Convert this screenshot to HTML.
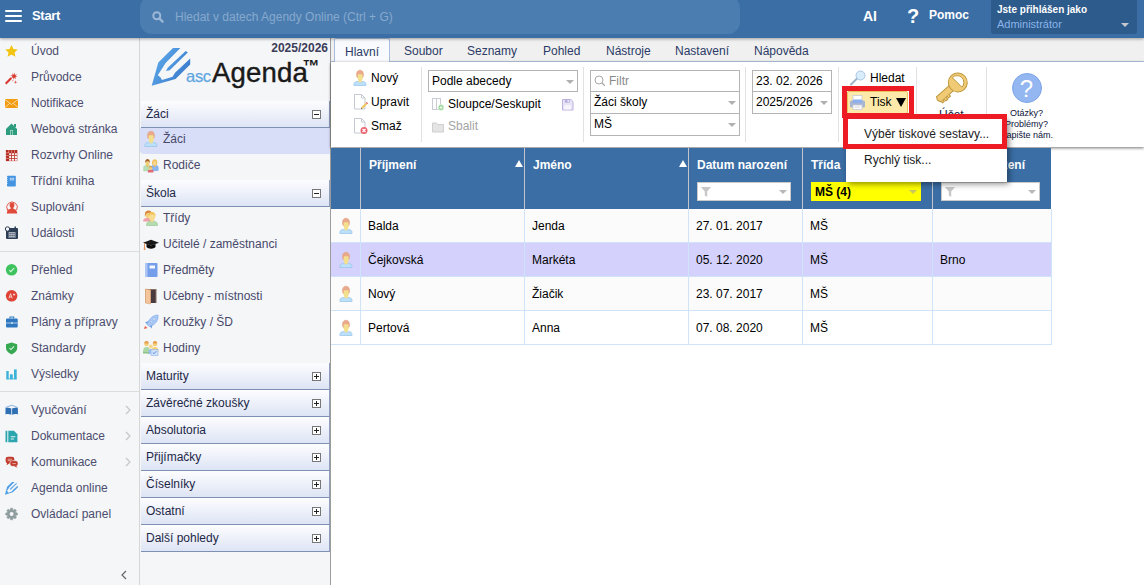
<!DOCTYPE html>
<html lang="cs">
<head>
<meta charset="utf-8">
<title>ascAgenda</title>
<style>
*{box-sizing:border-box;margin:0;padding:0}
html,body{width:1144px;height:585px;overflow:hidden;background:#fff}
body{font-family:"Liberation Sans",sans-serif;font-size:12px;color:#000;position:relative}
.abs{position:absolute}
/* top bar */
#top{position:absolute;left:0;top:0;width:1144px;height:38px;background:#3a6ea5;box-shadow:0 1px 3px rgba(0,0,0,.35);z-index:20}
#ham{position:absolute;left:5px;top:10px;width:17px;height:13px}
#ham i{display:block;height:2px;background:#fff;margin-bottom:3px;border-radius:1px}
#start{position:absolute;left:32px;top:8px;font-weight:bold;font-size:13px;color:#fff;letter-spacing:-.3px}
#search{position:absolute;left:140px;top:-4px;width:600px;height:38px;border-radius:12px;background:#4b7db0}
#search span{position:absolute;left:35px;top:14px;font-size:12px;color:#87a9ce;white-space:nowrap}
#ai{position:absolute;left:863px;top:8px;font-weight:bold;font-size:14px;color:#fff}
#q{position:absolute;left:907px;top:5px;font-weight:bold;font-size:20px;color:#fff}
#pomoc{position:absolute;left:929px;top:8px;font-weight:bold;font-size:12px;color:#fff}
#user{position:absolute;left:991px;top:-3px;width:146px;height:37px;background:#2c5b8c;border-radius:3px}
#user b{position:absolute;left:6px;top:7px;font-size:10px;color:#fff;white-space:nowrap}
#user span{position:absolute;left:6px;top:21px;font-size:11px;color:#8db3ea}
#user i{position:absolute;right:8px;top:26px;border:4px solid transparent;border-top:4px solid #c5c9cf;border-bottom:0}
/* left nav */
#nav{position:absolute;left:0;top:38px;width:140px;height:547px;background:#f5f6f8;border-right:1px solid #d6d6d6}
#nav .it{position:absolute;left:31px;font-size:12px;color:#4c4d6e;white-space:nowrap;margin-top:2px}
#nav .ic{position:absolute;left:4px;width:16px;height:16px}
#nav .sep{position:absolute;left:0;width:139px;height:1px;background:#dcdcdc}
#nav .ar{position:absolute;left:124px;font-size:12px;color:#c4c4c4}
/* panel 2 */
#pan{position:absolute;left:140px;top:38px;width:191px;height:547px;background:#f5f6f8;border-right:1px solid #9c9c9c}
.hd{position:absolute;left:1px;width:189px;height:27px;background:linear-gradient(#fdfdff,#dde4f4);border-bottom:1px solid #7f90b5;border-right:1px solid #8f9ebf;font-size:12px;color:#1d2747;padding:6px 0 0 5px}
.hd i{position:absolute;right:8px;top:9px;width:9px;height:9px;border:1px solid #777;background:#fff}
.hd i:before{content:"";position:absolute;left:1px;top:3px;width:5px;height:1px;background:#222}
.hd.plus i:after{content:"";position:absolute;left:3px;top:1px;width:1px;height:5px;background:#222}
.pi{position:absolute;left:0;width:190px;height:26px;font-size:12px;color:#47486a;padding:4px 0 0 23px;white-space:nowrap}
.pi.sel{background:#d9def8;border-radius:0 0 0 4px}
.pi svg{position:absolute;left:3px;top:2px}
/* main */
#tabs{position:absolute;left:331px;top:38px;width:813px;height:24px;background:#f0f0f0;border-bottom:1px solid #b5c7e3}
#tabs span{position:absolute;top:6px;font-size:12px;color:#2b3a66}
#tabs .act{top:0;height:24px;width:56px;background:#f8fafd;border:1px solid #a9bedd;border-bottom:0;padding:6px 0 0 10px;border-radius:2px 2px 0 0}
#rib{position:absolute;left:331px;top:62px;width:813px;height:85px;background:#fff;box-shadow:0 1px 3px rgba(0,0,0,.55);z-index:1}
.vs{position:absolute;top:4px;width:1px;height:75px;background:#e2e2e2}
.rb{position:absolute;font-size:12px;color:#000;white-space:nowrap}
.inp{position:absolute;height:21px;border:1px solid #b4b4b4;background:#fff;font-size:12px;padding:3px 0 0 3px;white-space:nowrap}
.inp i{position:absolute;right:3px;top:8px;border:4px solid transparent;border-top:4px solid #b0b0b0;border-bottom:0}
/* table */
#th{position:absolute;left:331px;top:148px;width:720px;height:61px;background:#3a6ea5;z-index:2}
#th b{position:absolute;top:10px;font-size:12px;color:#fff;white-space:nowrap}
#th .cs{position:absolute;top:0;width:1px;height:61px;background:#c2c5cc}
#th .f{position:absolute;top:34px;height:19px;background:#fff;border:1px solid #c9c9c9}
#th .f i{position:absolute;right:3px;top:7px;border:4px solid transparent;border-top:4px solid #b8b8b8;border-bottom:0}
#th .tri{position:absolute;top:12px;border:4px solid transparent;border-bottom:7px solid #fff;border-top:0}
.row{position:absolute;left:331px;width:721px;height:34px;border-bottom:1px solid #cfe4f8;background:#fff}
.row.alt{background:#fbfbfb}
.row.sel{background:#d4d2fc}
.row span{position:absolute;top:10px;font-size:12px;color:#000;white-space:nowrap}
.row u{position:absolute;top:0;width:1px;height:34px;background:#cfe4f8}
/* menu */
#menu{position:absolute;left:846px;top:118px;width:161px;height:64px;background:#fff;box-shadow:2px 2px 6px rgba(0,0,0,.45);z-index:30}
#menu span{position:absolute;left:18px;font-size:12px;color:#222;white-space:nowrap}
.red{position:absolute;border:5px solid #ed1c24;z-index:40}
</style>
</head>
<body>
<div id="top">
  <div id="ham"><i></i><i></i><i></i></div>
  <div id="start">Start</div>
  <div id="search">
    <svg class="abs" style="left:12px;top:15px" width="12" height="12" viewBox="0 0 12 12"><circle cx="4.8" cy="4.8" r="3.5" fill="none" stroke="#9db8d6" stroke-width="2"/><path d="M7.4 7.4L10.6 10.6" stroke="#9db8d6" stroke-width="2.2" stroke-linecap="round"/></svg>
    <span>Hledat v datech Agendy Online (Ctrl + G)</span>
  </div>
  <div id="ai">AI</div>
  <div id="q">?</div>
  <div id="pomoc">Pomoc</div>
  <div id="user"><b>Jste přihlášen jako</b><span>Administrátor</span><i></i></div>
</div>

<div id="nav">
<div class="it" style="top:4px">Úvod</div>
<div class="it" style="top:30px">Průvodce</div>
<div class="it" style="top:56px">Notifikace</div>
<div class="it" style="top:82px">Webová stránka</div>
<div class="it" style="top:108px">Rozvrhy Online</div>
<div class="it" style="top:134px">Třídní kniha</div>
<div class="it" style="top:160px">Suplování</div>
<div class="it" style="top:186px">Události</div>
<div class="sep" style="top:213px"></div>
<div class="it" style="top:223px">Přehled</div>
<div class="it" style="top:249px">Známky</div>
<div class="it" style="top:275px">Plány a přípravy</div>
<div class="it" style="top:301px">Standardy</div>
<div class="it" style="top:327px">Výsledky</div>
<div class="sep" style="top:353px"></div>
<div class="it" style="top:363px">Vyučování</div>
<div class="it" style="top:389px">Dokumentace</div>
<div class="it" style="top:415px">Komunikace</div>
<div class="it" style="top:441px">Agenda online</div>
<div class="it" style="top:467px">Ovládací panel</div>
<svg class="ar" style="top:367px;left:125px" width="6" height="10" viewBox="0 0 6 10"><path d="M1 1L5 5L1 9" fill="none" stroke="#c6c6c6" stroke-width="1.2"/></svg>
<svg class="ar" style="top:393px;left:125px" width="6" height="10" viewBox="0 0 6 10"><path d="M1 1L5 5L1 9" fill="none" stroke="#c6c6c6" stroke-width="1.2"/></svg>
<svg class="ar" style="top:419px;left:125px" width="6" height="10" viewBox="0 0 6 10"><path d="M1 1L5 5L1 9" fill="none" stroke="#c6c6c6" stroke-width="1.2"/></svg>
<svg class="ar" style="top:532px;left:121px" width="6" height="10" viewBox="0 0 6 10"><path d="M5 1L1 5L5 9" fill="none" stroke="#666" stroke-width="1.2"/></svg>
<!-- icons -->
<svg class="ic" style="top:5px" viewBox="0 0 16 16"><path d="M7.5 2l1.9 4 4.3.5-3.2 3 .9 4.3-3.9-2.2-3.9 2.2.9-4.3-3.2-3 4.3-.5z" fill="#f2c40f"/></svg>
<svg class="ic" style="top:32px" viewBox="0 0 16 16"><path d="M1.700 13.800L7.300 8.100" stroke="#d8392e" stroke-width="2.100" stroke-linecap="butt"/><path d="M10.74 2.57L10.84 4.96L13.08 4.16L11.47 5.91L13.63 6.94L11.24 7.04L12.04 9.28L10.29 7.67L9.26 9.83L9.16 7.44L6.92 8.24L8.53 6.49L6.37 5.46L8.76 5.36L7.96 3.12L9.71 4.73Z" fill="#d8392e"/><path d="M11.60 10.30L11.99 11.81L13.50 12.20L11.99 12.59L11.60 14.10L11.21 12.59L9.70 12.20L11.21 11.81Z" fill="#d8392e"/><circle cx="8.800" cy="10.800" r=".5" fill="#d8392e"/></svg>
<svg class="ic" style="top:57px" viewBox="0 0 16 16"><rect x="1" y="4" width="13" height="9" fill="#f39c12"/><path d="M1 4.500l6.500 5 6.500-5M1 12.500l4.500-4M14 12.500L9.500 8.500" stroke="#fbe3b5" stroke-width=".9" fill="none"/></svg>
<svg class="ic" style="top:83px" viewBox="0 0 16 16"><path d="M2 8L7.500 2.500 13 8v6H2z" fill="#2e9c7e"/><rect x="10" y="3" width="2" height="3" fill="#2e9c7e"/><rect x="6" y="9" width="3" height="5" fill="#a6d8c8"/><rect x="6.800" y="9.800" width="1.400" height="4.200" fill="#2e9c7e"/></svg>
<svg class="ic" style="top:109px" viewBox="0 0 16 16"><rect x="1.900" y="3" width="11.400" height="11.100" fill="#b52b20"/><path d="M5.15 6.18h2.100v2.050h-2.100zM5.15 8.96h2.100v2.050h-2.100zM5.15 11.74h2.100v2.050h-2.100zM8.00 6.18h2.100v2.050h-2.100zM8.00 8.96h2.100v2.050h-2.100zM8.00 11.74h2.100v2.050h-2.100zM10.85 6.18h2.100v2.050h-2.100zM10.85 8.96h2.100v2.050h-2.100zM10.85 11.74h2.100v2.050h-2.100z" fill="#fbf3f2"/><path d="M4.80 3v2.98M1.900 5.83h3.05M7.65 3v2.98M1.900 8.61h3.05M10.50 3v2.98M1.900 11.39h3.05" stroke="#f0d0cc" stroke-width=".55" fill="none"/></svg>
<svg class="ic" style="top:135px" viewBox="0 0 16 16"><rect x="3" y="2.700" width="8.800" height="10.800" rx=".8" fill="#4594e2"/><path d="M3 4.500h.8M3 6.500h.8M3 8.500h.8M3 10.500h.8" stroke="#cfe3f8" stroke-width=".7"/><rect x="5.800" y="4.800" width="4.300" height="2.600" fill="#b9d8f5"/><rect x="6.600" y="5.500" width="2.700" height="1.200" fill="#7ab4ec"/></svg>
<svg class="ic" style="top:161px" viewBox="0 0 16 16"><path d="M3.600 11.200A5.300 5.300 0 1 1 12.600 11" fill="none" stroke="#e04a3a" stroke-width=".9"/><path d="M2.600 10.200l1 1.600 1.300-1.300z" fill="#e04a3a"/><path d="M8 3.600c1.500 0 2.400 1.100 2.400 2.700 0 1.100-.5 2-1.100 2.500v.9c2.200.3 3.700 1.500 4 4.900H2.700c.3-3.400 1.800-4.600 4-4.900v-.9C6.100 8.300 5.600 7.400 5.600 6.300 5.600 4.700 6.500 3.600 8 3.600z" fill="#e04a3a"/></svg>
<svg class="ic" style="top:187px" viewBox="0 0 16 16"><rect x="2" y="3" width="12" height="11" rx="1" fill="#2c3e56"/><path d="M4.500 8h7.500M4.500 10h7.500M4.500 12h7.500M6 7v6M8 7v6M10 7v6" stroke="#f0f3f7" stroke-width="1" stroke-dasharray="1.200 .8"/><circle cx="3.500" cy="4" r="2.200" fill="#f5f6f8" stroke="#2c3e56" stroke-width="1"/><rect x="10.500" y="1.500" width="1.500" height="3" fill="#2c3e56"/></svg>
<svg class="ic" style="top:224px" viewBox="0 0 16 16"><circle cx="7.600" cy="7.800" r="5.800" fill="#3fc35f"/><path d="M5.200 8l1.700 1.700L10.100 6" stroke="#dff7e5" stroke-width="1.050" fill="none"/></svg>
<svg class="ic" style="top:250px" viewBox="0 0 16 16"><circle cx="7.600" cy="7.800" r="5.800" fill="#de4336"/><path d="M5 10.300L6.600 5.700 8.200 10.300M5.600 8.900h2M9 6.600h2.200M10.100 5.500v2.200" stroke="#fbe0dd" stroke-width=".85" fill="none"/></svg>
<svg class="ic" style="top:276px" viewBox="0 0 16 16"><rect x="2" y="4.600" width="11.700" height="8.800" rx="1" fill="#2f78c0"/><path d="M6 4.600v-1.600h3.700v1.600" stroke="#2f78c0" stroke-width="1.100" fill="none"/><path d="M2 9h11.700" stroke="#cfe2f3" stroke-width=".8"/><rect x="7" y="8.200" width="1.700" height="1.700" fill="#cfe2f3"/></svg>
<svg class="ic" style="top:302px" viewBox="0 0 16 16"><path d="M7.600 2.400L13.200 4.200V8C13.200 11 10.600 12.900 7.600 14.400 4.600 12.900 2 11 2 8V4.200z" fill="#36a852"/><path d="M5.400 8l1.600 1.600L10 6.400" stroke="#e0f5e5" stroke-width="1.050" fill="none"/></svg>
<svg class="ic" style="top:328px" viewBox="0 0 16 16"><rect x="2.300" y="5" width="2.400" height="8.300" fill="#3db2d8"/><rect x="5.900" y="8.300" width="2.900" height="5" fill="#3db2d8"/><rect x="10" y="3.400" width="2.700" height="9.900" fill="#3db2d8"/><rect x="2.300" y="12.500" width="10.400" height=".8" fill="#3db2d8"/></svg>
<svg class="ic" style="top:364px" viewBox="0 0 16 16"><path d="M1.500 5.600L7.700 3.200 13.900 5.600" stroke="#5d93cf" stroke-width=".7" fill="none"/><path d="M1.500 6.200c2-.6 4-.5 5.800.4v6.200c-1.800-.9-3.800-1-5.800-.4zM13.900 6.200c-2-.6-4-.5-5.800.4v6.200c1.800-.9 3.800-1 5.800-.4z" fill="#2f6fb3"/></svg>
<svg class="ic" style="top:390px" viewBox="0 0 16 16"><rect x="1.500" y="2.800" width="1.800" height="11.400" fill="#2ba5ae"/><path d="M4.300 2.800h5.700l3.400 3.400v8h-9.100z" fill="#2ba5ae"/><path d="M6.700 8.700h4.600M6.700 11h3.200" stroke="#e3f5f6" stroke-width="1.100"/></svg>
<svg class="ic" style="top:416px" viewBox="0 0 16 16"><rect x="1.600" y="2.700" width="8.700" height="6.600" rx="2.400" fill="#c0392b"/><path d="M3.200 8.500L2.600 11.300 5.800 9z" fill="#c0392b"/><rect x="6" y="6.700" width="8" height="5.600" rx="2.200" fill="#c0392b" stroke="#f5f6f8" stroke-width=".6"/><path d="M12 11.800l1.600 2-3.300-1.600z" fill="#c0392b"/><path d="M3.600 5.200h4.600M3.600 6.700h3M8.300 9.600h3.600" stroke="#f0c4bf" stroke-width=".8"/></svg>
<svg class="ic" style="top:442px" viewBox="0 0 16 16"><g transform="translate(.9 2) scale(.335) translate(-151.700 -48.100)" fill="#4f9fe6"><path d="M151.700 85.800L158.300 62.500 173 48.100 180.400 48.100 165.600 62.900 157.800 75.200Q161 76.500 162 80.100L172.600 76.800 175 72.700 190.200 58.400 190.200 64.500 175.500 78.900Z"/><path d="M185.700 51L187.800 52.600 169.700 70.300 166 71.100 167.700 67.800Z"/></g></svg>
<svg class="ic" style="top:468px" viewBox="0 0 16 16"><path d="M6.21 3.93L6.63 2.18L8.57 2.18L8.99 3.93L9.49 4.14L11.03 3.20L12.40 4.57L11.46 6.11L11.67 6.61L13.42 7.03L13.42 8.97L11.67 9.39L11.46 9.89L12.40 11.43L11.03 12.80L9.49 11.86L8.99 12.07L8.57 13.82L6.63 13.82L6.21 12.07L5.71 11.86L4.17 12.80L2.80 11.43L3.74 9.89L3.53 9.39L1.78 8.97L1.78 7.03L3.53 6.61L3.74 6.11L2.80 4.57L4.17 3.20L5.71 4.14Z" fill="#8f9d9e" stroke="#8f9d9e" stroke-width=".6" stroke-linejoin="round"/><circle cx="7.600" cy="8" r="2" fill="#f5f6f8"/></svg>
</div>

<div id="pan">
<div class="abs" style="right:2px;top:3px;font-weight:bold;font-size:12px;color:#3b3c58">2025/2026</div>
<svg class="abs" style="left:8px;top:6px" width="48" height="46" viewBox="148 44 48 46"><defs><linearGradient id="pg" x1="0" y1="0" x2="1" y2=".6"><stop offset="0" stop-color="#62b0ee"/><stop offset="1" stop-color="#3a7bcc"/></linearGradient></defs><path d="M151.700 85.800L158.300 62.500 173 48.100 180.400 48.100 165.600 62.900 157.800 75.200Q161 76.500 162 80.100L172.600 76.800 175 72.700 190.200 58.400 190.200 64.500 175.500 78.900Z" fill="url(#pg)"/><path d="M185.700 51L187.800 52.600 169.700 70.300 166 71.100 167.700 67.800Z" fill="url(#pg)"/></svg>
<div class="abs" style="left:46px;top:29px;font-size:16.500px;color:#5ea6e2;letter-spacing:-.3px;-webkit-text-stroke:.25px #5ea6e2">asc</div>
<div class="abs" style="left:72px;top:19px;font-size:27.600px;color:#1a1a1a;letter-spacing:.15px;-webkit-text-stroke:.4px #1a1a1a">Agenda</div>
<div class="abs" style="left:162.500px;top:22.500px;font-size:17px;font-weight:bold;color:#1a1a1a;line-height:12px">™</div>

<div class="hd" style="top:63px">Žáci<i></i></div>
<div class="pi sel" style="top:90px"><svg width="16" height="18" viewBox="0 0 16 18"><path d="M1.900 16.500v-1.200c0-1.900 1.500-2.700 3.500-2.700h5.100c2 0 3.500.8 3.500 2.700v1.200z" fill="#bde0fa" stroke="#93c3ea" stroke-width=".7"/><path d="M4.500 6.300C4.200 3 5.700 1.200 8 1.200s3.800 1.800 3.500 5.100c0 .9-.2 1.700-.6 2.100L5.100 8.400C4.700 7.900 4.500 7.200 4.500 6.300z" fill="#eaa98a" stroke="#dc9c7c" stroke-width=".5"/><path d="M5.700 6.600c0-1 .5-1.400 1.200-1.400h2.200c1 0 1.500.5 1.500 1.400v3c0 1-.5 2-1 2.500v1.200h-3v-1.200c-.5-.5-.9-1.500-.9-2.500z" fill="#f2e08e"/></svg>Žáci</div>
<div class="pi" style="top:116px"><svg style="left:1.500px;top:2.500px" width="18" height="18" viewBox="0 0 18 18"><path d="M1.700 14v-3.500c0-1.300.8-2 2-2h3.600c1.200 0 2 .7 2 2v3z" fill="#b7dfb7" stroke="#9ccf9c" stroke-width=".5"/><path d="M4.300 7.500h2.400v1.800l-1.200.6-1.200-.6z" fill="#e8c060"/><ellipse cx="5.500" cy="5.800" rx="2.100" ry="2.800" fill="#f3cf7a"/><path d="M3.300 6c-.4-2.600.8-3.900 2.200-3.900S8.100 3.400 7.700 6C7.300 4.800 6.700 4.300 5.500 4.300S3.700 4.800 3.300 6z" fill="#a4642f"/><path d="M9 14v-3.500c0-1.300.8-2 2-2h3.200c1.200 0 2 .7 2 2v3z" fill="#8bb5ef" stroke="#74a2e4" stroke-width=".5"/><path d="M11.600 7.500h2.200v1.800l-1.100.6-1.100-.6z" fill="#e8c060"/><path d="M10.300 7.800C9.500 4.500 10.800 2.300 12.700 2.300s3.200 2.200 2.400 5.500c-.5.500-1 .2-1.200-.3h-2.400c-.2.500-.7.800-1.200.3z" fill="#f0c060"/><ellipse cx="12.700" cy="6.300" rx="1.500" ry="2.200" fill="#f6d88a"/><path d="M5.800 15.500v-1.200c0-1 .6-1.500 1.500-1.500h2.600c.9 0 1.500.5 1.500 1.500v1.200z" fill="#e26a72"/><circle cx="8.600" cy="11.300" r="1.700" fill="#f3cf7a"/><path d="M6.800 11.200c0-1.500.8-2.100 1.800-2.100s1.800.6 1.800 2.100c-.5-.8-.9-1-1.800-1s-1.300.2-1.800 1z" fill="#d8a050"/></svg>Rodiče</div>
<div class="hd" style="top:142px">Škola<i></i></div>
<div class="pi" style="top:169px"><svg style="left:1.500px" width="18" height="18" viewBox="0 0 18 18"><path d="M1 12.500c0-2.500 1.500-3.500 4.500-3.500S9 10 9 12.500z" fill="#f0a0a8"/><ellipse cx="6" cy="5.500" rx="2.800" ry="3.500" fill="#f3cf7a"/><path d="M3 7.500C2.300 3.500 4 1.500 6.500 1.500S10 3 9.500 5C8.500 4 7.500 4 6 4S3.500 5.500 3 7.500z" fill="#d98a40"/><path d="M4.500 16.500c0-3 1.500-4.500 5.500-4.500s5.500 1.500 5.500 4.500z" fill="#b4dcae" stroke="#8cc486" stroke-width=".6"/><rect x="8.600" y="10" width="2.800" height="3" fill="#f6d88a"/><ellipse cx="10" cy="7.500" rx="3.200" ry="4" fill="#f8dc90"/><path d="M6.600 8C6 4.500 7.800 3 10 3s4 1.500 3.400 5C12.800 6.200 12 5.500 10 5.500S7.200 6.200 6.600 8z" fill="#f3c560"/></svg>Třídy</div>
<div class="pi" style="top:195px"><svg style="left:1.500px" width="18" height="18" viewBox="0 0 18 18"><path d="M1 7.700L9 4.800l8 2.900L9 10.400z" fill="#181818"/><path d="M4.500 8.800v3.300c1 1.100 2.500 1.600 4.500 1.600s3.500-.5 4.500-1.600V8.800L9 10.400z" fill="#0c0c0c"/><path d="M2.500 8v5" stroke="#e08a4a" stroke-width=".9"/><rect x="1.800" y="12.500" width="1.500" height="2.500" fill="#e8945a"/></svg>Učitelé / zaměstnanci</div>
<div class="pi" style="top:221px"><svg style="left:1.500px" width="18" height="18" viewBox="0 0 18 18"><rect x="3" y="2" width="12.500" height="14" rx="1" fill="#759eea"/><rect x="3" y="2" width="2.500" height="14" fill="#aec6f5"/><rect x="7.500" y="4.500" width="5.500" height="3" fill="#f4f8ff"/></svg>Předměty</div>
<div class="pi" style="top:247px"><svg style="left:1.500px" width="18" height="18" viewBox="0 0 18 18"><rect x="3.500" y="2" width="11" height="14" fill="#8d6c62"/><rect x="9" y="3" width="4.500" height="13" fill="#493a40"/><path d="M3.500 2l5 1v14l-5-1z" fill="#f4c49a" stroke="#dca070" stroke-width=".6"/></svg>Učebny - místnosti</div>
<div class="pi" style="top:273px"><svg style="left:1.500px" width="18" height="18" viewBox="0 0 18 18"><path d="M16 2c-4 0-7 2-9.500 6L5 11.500 7.500 13.500 11 12c4-2.500 5.500-6 5-10z" fill="#a9c8f5" stroke="#7ba5e8" stroke-width=".6"/><circle cx="12" cy="6" r="1.300" fill="#e8f1fc" stroke="#7ba5e8" stroke-width=".5"/><circle cx="9.300" cy="8.800" r="1" fill="#e8f1fc" stroke="#7ba5e8" stroke-width=".5"/><path d="M6.500 8L3 9.500l2 1.500zM10.500 12l-1 3.500-1.700-2z" fill="#6f9fe0"/><path d="M2 16l1-3 2.500 2z" fill="#ee5a4a"/></svg>Kroužky / ŠD</div>
<div class="pi" style="top:299px"><svg style="left:1.500px" width="18" height="18" viewBox="0 0 18 18"><circle cx="4.500" cy="5" r="2.300" fill="#f3cf7a"/><circle cx="13" cy="5" r="2.300" fill="#f3cf7a"/><path d="M2.300 4.500C2.300 2.500 3.300 2 4.500 2s2.200.5 2.200 2.500zM10.800 4.500c0-2 1-2.500 2.200-2.500s2.200.5 2.200 2.500z" fill="#e8a050"/><path d="M1 13c0-3.500 1-5 3.500-5S8 9.500 8 13z" fill="#a9d8a4"/><path d="M9.500 13c0-3.500 1-5 3.500-5s3.500 1.500 3.500 5z" fill="#f5d070"/><circle cx="8.800" cy="7.500" r="2" fill="#f6d88a"/><path d="M6 15c0-3.500 1-5 2.800-5s2.800 1.500 2.800 5z" fill="#9dbcf0"/><rect x="9" y="10.500" width="7" height="6" fill="#cfe2fa" stroke="#8fb3e8" stroke-width=".6"/><path d="M10.800 13.500l1.200 1.200 2.300-2.500" stroke="#5e8de0" stroke-width="1" fill="none"/><rect x="1" y="13" width="6" height="1.500" fill="#8cc486"/></svg>Hodiny</div>
<div class="hd plus" style="top:325px">Maturity<i></i></div>
<div class="hd plus" style="top:352px">Závěrečné zkoušky<i></i></div>
<div class="hd plus" style="top:379px">Absolutoria<i></i></div>
<div class="hd plus" style="top:406px">Přijímačky<i></i></div>
<div class="hd plus" style="top:433px">Číselníky<i></i></div>
<div class="hd plus" style="top:460px">Ostatní<i></i></div>
<div class="hd plus" style="top:487px">Další pohledy<i></i></div>
</div>

<div id="tabs">
  <span class="act" style="left:3px">Hlavní</span>
  <span style="left:73px">Soubor</span>
  <span style="left:136px">Seznamy</span>
  <span style="left:212px">Pohled</span>
  <span style="left:275px">Nástroje</span>
  <span style="left:344px">Nastavení</span>
  <span style="left:423px">Nápověda</span>
</div>
<div id="rib">
<!-- coords relative to rib: left 330, top 63 -->
<div class="abs" style="left:-1px;top:1px;width:814px;height:84px">
<svg class="abs" style="left:22px;top:6px" width="16" height="18" viewBox="0 0 16 18"><path d="M1.900 16.500v-1.200c0-1.900 1.500-2.700 3.500-2.700h5.100c2 0 3.500.8 3.500 2.700v1.200z" fill="#bde0fa" stroke="#93c3ea" stroke-width=".7"/><path d="M4.500 6.300C4.200 3 5.700 1.200 8 1.200s3.800 1.800 3.500 5.100c0 .9-.2 1.700-.6 2.100L5.100 8.400C4.700 7.900 4.500 7.200 4.500 6.300z" fill="#eaa98a" stroke="#dc9c7c" stroke-width=".5"/><path d="M5.700 6.600c0-1 .5-1.400 1.200-1.400h2.200c1 0 1.500.5 1.500 1.400v3c0 1-.5 2-1 2.500v1.200h-3v-1.200c-.5-.5-.9-1.500-.9-2.500z" fill="#f2e08e"/></svg>
<div class="rb" style="left:41px;top:8px">Nový</div>
<svg class="abs" style="left:22px;top:30px" width="16" height="18" viewBox="0 0 16 18"><path d="M2.500 1.500h7l3.500 3.500v11h-10.500z" fill="#fff" stroke="#c5c9d2" stroke-width="1"/><path d="M9.500 1.500v3.500h3.500" fill="none" stroke="#c5c9d2" stroke-width="1"/><path d="M9 16l.7-2.200 4-4 1.500 1.500-4 4z" fill="#f0c860"/><path d="M13.700 9.800l.9-.9 1.500 1.500-.9.900z" fill="#e86068"/><path d="M9 16l.45-1.400.95.950z" fill="#555"/></svg>
<div class="rb" style="left:41px;top:32px">Upravit</div>
<svg class="abs" style="left:22px;top:54px" width="16" height="18" viewBox="0 0 16 18"><path d="M2.500 1.500h7l3.500 3.500v11h-10.500z" fill="#fff" stroke="#c5c9d2" stroke-width="1"/><path d="M9.500 1.500v3.500h3.500" fill="none" stroke="#c5c9d2" stroke-width="1"/><circle cx="12" cy="13.500" r="3.500" fill="#ea6470"/><path d="M10.500 12l3 3M13.500 12l-3 3" stroke="#fff" stroke-width="1.100"/></svg>
<div class="rb" style="left:41px;top:56px">Smaž</div>
<div class="vs" style="left:91px"></div>

<div class="inp" style="left:98px;top:7px;width:150px;height:22px;padding-top:3px">Podle abecedy<i style="top:9px"></i></div>
<svg class="abs" style="left:101px;top:34px" width="14" height="14" viewBox="0 0 14 14"><rect x="1.500" y="1.500" width="8" height="11" fill="#fff" stroke="#c9ccd2" stroke-width="1"/><path d="M5.500 1.500v11" stroke="#c9ccd2" stroke-width="1"/><circle cx="10" cy="10.500" r="2.900" fill="#8fd28f" stroke="#fff" stroke-width=".6"/><path d="M8.500 10.500h3M10 9v3" stroke="#fff" stroke-width=".9"/></svg>
<div class="rb" style="left:118px;top:34px">Sloupce/Seskupit</div>
<svg class="abs" style="left:231px;top:35px" width="13" height="13" viewBox="0 0 13 13"><path d="M1.500 1.500h8.300l2.200 2.200v8.300h-10.500z" fill="#e9e5f7" stroke="#bbb2e2" stroke-width="1"/><rect x="3.800" y="1.500" width="5" height="3.300" fill="#bbb2e2"/><rect x="6.600" y="2.100" width="1.300" height="2" fill="#f1effa"/><rect x="3.300" y="7.300" width="6.600" height="4.200" fill="#f7f6fc"/></svg>
<svg class="abs" style="left:101px;top:57px" width="14" height="14" viewBox="0 0 14 14"><path d="M1.500 3h4l1 1.500h6v7.500h-11z" fill="#e4e4e4" stroke="#cfcfcf" stroke-width="1"/></svg>
<div class="rb" style="left:118px;top:56px;color:#a4a4a4">Sbalit</div>
<div class="vs" style="left:253px"></div>

<div class="inp" style="left:260px;top:7px;width:150px;height:22px;padding:3px 0 0 18px;color:#8a8a8a">Filtr</div>
<svg class="abs" style="left:264px;top:12px" width="12" height="12" viewBox="0 0 12 12"><circle cx="5" cy="5" r="4" fill="none" stroke="#a8a8a8" stroke-width="1"/><path d="M8 8L10.800 10.800" stroke="#a8a8a8" stroke-width="1.300"/></svg>
<div class="inp" style="left:260px;top:28px;width:150px;height:23px;padding-top:3px">Žáci školy<i style="top:9px"></i></div>
<div class="inp" style="left:260px;top:50px;width:150px;height:23px;padding-top:3px">MŠ<i style="top:9px"></i></div>
<div class="vs" style="left:415px"></div>

<div class="inp" style="left:422px;top:7px;width:80px;height:22px;padding-top:3px">23. 02. 2026</div>
<div class="inp" style="left:422px;top:28px;width:80px;height:23px;padding-top:3px">2025/2026<i style="top:9px"></i></div>
<div class="vs" style="left:508px"></div>

<svg class="abs" style="left:520px;top:7px" width="17" height="16" viewBox="0 0 17 16"><path d="M1 14.500L7 8.500" stroke="#9fb4c8" stroke-width="2" stroke-linecap="round"/><circle cx="10.500" cy="5.500" r="4.500" fill="#d8ecfb" stroke="#a9c6e4" stroke-width="1"/></svg>
<div class="rb" style="left:540px;top:8px">Hledat</div>
<div class="abs" style="left:517px;top:28px;width:61px;height:23px;background:#fdeaaa;border:1px solid #e9c45c;border-radius:2px"></div>
<svg class="abs" style="left:519px;top:31px" width="17" height="17" viewBox="0 0 17 17"><rect x="4" y="1.500" width="9" height="6" fill="#fff" stroke="#c8ccd4" stroke-width=".8"/><rect x="1" y="6.500" width="15" height="7" rx="1.500" fill="#a9b6d2"/><rect x="4" y="5.500" width="9" height="3.500" fill="#8fb0ee"/><rect x="4" y="11" width="9" height="4.500" fill="#fff" stroke="#c8ccd4" stroke-width=".8"/><path d="M5.500 13h6" stroke="#c8ccd4" stroke-width=".8"/></svg>
<div class="rb" style="left:540px;top:32px">Tisk</div>
<div class="abs" style="left:566px;top:35px;border:5px solid transparent;border-top:9px solid #000;border-bottom:0"></div>
<div class="vs" style="left:586px"></div>

<svg class="abs" style="left:600px;top:3px" width="44" height="40" viewBox="0 0 44 40"><g transform="translate(27.800 16.500) rotate(138.800)" fill="#f1ca76" stroke="#bf993e" stroke-width="1" stroke-linejoin="round"><path d="M6 -3.300H25.500L27 0 25.500 3.300H6z"/><path d="M14.500 -3.300v-2.200h2.600v2.200M18.500 -3.300v-2.800h2.600v2.800M22.500 -3.300v-2h2.400v2" /><circle cx="0" cy="0" r="9.500"/></g><path d="M22.300 11.600A6.500 6.500 0 0 1 31.900 21.200Z" fill="#fff" stroke="#bf993e" stroke-width="1" stroke-linejoin="round"/></svg>
<div class="rb" style="left:609px;top:45px;color:#101838">Účet</div>
<div class="vs" style="left:656px"></div>

<div class="abs" style="left:681.500px;top:9.500px;width:30px;height:30px;border-radius:50%;background:#94b6f1;border:1px solid #7ea5ea"></div>
<div class="abs" style="left:681px;top:11px;width:31px;text-align:center;font-size:24px;color:#fff;line-height:29px">?</div>
<div class="abs" style="left:656px;top:45px;width:81px;text-align:center;font-size:9px;line-height:11px;color:#0c1238">Otázky?<br>Problémy?<br>Napište nám.</div>
</div>
</div>

<div id="th">
<div class="cs" style="left:29px"></div><div class="cs" style="left:193px"></div><div class="cs" style="left:357px"></div><div class="cs" style="left:471px"></div><div class="cs" style="left:601px"></div>
<b style="left:38px">Příjmení</b><b style="left:202px">Jméno</b><b style="left:366px">Datum narození</b><b style="left:480px">Třída</b><b style="left:610px">Místo narození</b>
<div class="tri" style="left:184px"></div><div class="tri" style="left:348px"></div>
<div class="f" style="left:366px;width:94px"><i></i><svg class="abs" style="left:3px;top:3px" width="11" height="12" viewBox="0 0 11 12"><path d="M0 1h10L6.200 5.500V11L3.800 9.500V5.500z" fill="#c8c8c8"/></svg></div>
<div class="f" style="left:480px;width:110px;background:#ff0;border-color:#ff0"><i style="border-top-color:#c8c860"></i><span class="abs" style="left:3px;top:2px;font-size:12px;font-weight:bold;color:#000">MŠ (4)</span></div>
<div class="f" style="left:610px;width:99px"><i></i><svg class="abs" style="left:3px;top:3px" width="11" height="12" viewBox="0 0 11 12"><path d="M0 1h10L6.200 5.500V11L3.800 9.500V5.500z" fill="#c8c8c8"/></svg></div>
</div>
<div class="row alt" style="top:209px"><svg class="abs" style="left:7px;top:8px" width="16" height="18" viewBox="0 0 16 18"><path d="M1.900 16.500v-1.200c0-1.900 1.500-2.700 3.500-2.700h5.100c2 0 3.500.8 3.500 2.700v1.200z" fill="#bde0fa" stroke="#93c3ea" stroke-width=".7"/><path d="M4.500 6.300C4.200 3 5.700 1.200 8 1.200s3.800 1.800 3.500 5.100c0 .9-.2 1.700-.6 2.100L5.100 8.400C4.700 7.900 4.500 7.200 4.500 6.300z" fill="#eaa98a" stroke="#dc9c7c" stroke-width=".5"/><path d="M5.700 6.600c0-1 .5-1.400 1.200-1.400h2.200c1 0 1.500.5 1.500 1.400v3c0 1-.5 2-1 2.500v1.200h-3v-1.200c-.5-.5-.9-1.500-.9-2.500z" fill="#f2e08e"/></svg><u style="left:29px"></u><u style="left:193px"></u><u style="left:357px"></u><u style="left:471px"></u><u style="left:601px"></u><u style="left:720px"></u><span style="left:37px">Balda</span><span style="left:201px">Jenda</span><span style="left:365px">27. 01. 2017</span><span style="left:479px">MŠ</span><span style="left:609px"></span></div>
<div class="row sel" style="top:243px"><svg class="abs" style="left:7px;top:8px" width="16" height="18" viewBox="0 0 16 18"><path d="M1.900 16.500v-1.200c0-1.900 1.500-2.700 3.500-2.700h5.100c2 0 3.500.8 3.500 2.700v1.200z" fill="#bde0fa" stroke="#93c3ea" stroke-width=".7"/><path d="M4.500 6.300C4.200 3 5.700 1.200 8 1.200s3.800 1.800 3.500 5.100c0 .9-.2 1.700-.6 2.100L5.100 8.400C4.700 7.900 4.500 7.200 4.500 6.300z" fill="#eaa98a" stroke="#dc9c7c" stroke-width=".5"/><path d="M5.700 6.600c0-1 .5-1.400 1.200-1.400h2.200c1 0 1.500.5 1.500 1.400v3c0 1-.5 2-1 2.500v1.200h-3v-1.200c-.5-.5-.9-1.500-.9-2.500z" fill="#f2e08e"/></svg><u style="left:29px"></u><u style="left:193px"></u><u style="left:357px"></u><u style="left:471px"></u><u style="left:601px"></u><u style="left:720px"></u><span style="left:37px">Čejkovská</span><span style="left:201px">Markéta</span><span style="left:365px">05. 12. 2020</span><span style="left:479px">MŠ</span><span style="left:609px">Brno</span></div>
<div class="row alt" style="top:277px"><svg class="abs" style="left:7px;top:8px" width="16" height="18" viewBox="0 0 16 18"><path d="M1.900 16.500v-1.200c0-1.900 1.500-2.700 3.500-2.700h5.100c2 0 3.500.8 3.500 2.700v1.200z" fill="#bde0fa" stroke="#93c3ea" stroke-width=".7"/><path d="M4.500 6.300C4.200 3 5.700 1.200 8 1.200s3.800 1.800 3.500 5.100c0 .9-.2 1.700-.6 2.100L5.100 8.400C4.700 7.900 4.500 7.200 4.500 6.300z" fill="#eaa98a" stroke="#dc9c7c" stroke-width=".5"/><path d="M5.700 6.600c0-1 .5-1.400 1.200-1.400h2.200c1 0 1.500.5 1.500 1.400v3c0 1-.5 2-1 2.500v1.200h-3v-1.200c-.5-.5-.9-1.500-.9-2.500z" fill="#f2e08e"/></svg><u style="left:29px"></u><u style="left:193px"></u><u style="left:357px"></u><u style="left:471px"></u><u style="left:601px"></u><u style="left:720px"></u><span style="left:37px">Nový</span><span style="left:201px">Žiačik</span><span style="left:365px">23. 07. 2017</span><span style="left:479px">MŠ</span><span style="left:609px"></span></div>
<div class="row " style="top:311px"><svg class="abs" style="left:7px;top:8px" width="16" height="18" viewBox="0 0 16 18"><path d="M1.900 16.500v-1.200c0-1.900 1.500-2.700 3.500-2.700h5.100c2 0 3.500.8 3.500 2.700v1.200z" fill="#bde0fa" stroke="#93c3ea" stroke-width=".7"/><path d="M4.500 6.300C4.200 3 5.700 1.200 8 1.200s3.800 1.800 3.500 5.100c0 .9-.2 1.700-.6 2.100L5.100 8.400C4.700 7.900 4.500 7.200 4.500 6.300z" fill="#eaa98a" stroke="#dc9c7c" stroke-width=".5"/><path d="M5.700 6.600c0-1 .5-1.400 1.200-1.400h2.200c1 0 1.500.5 1.500 1.400v3c0 1-.5 2-1 2.500v1.200h-3v-1.200c-.5-.5-.9-1.500-.9-2.500z" fill="#f2e08e"/></svg><u style="left:29px"></u><u style="left:193px"></u><u style="left:357px"></u><u style="left:471px"></u><u style="left:601px"></u><u style="left:720px"></u><span style="left:37px">Pertová</span><span style="left:201px">Anna</span><span style="left:365px">07. 08. 2020</span><span style="left:479px">MŠ</span><span style="left:609px"></span></div>
<div id="menu"><span style="top:9px">Výběr tiskové sestavy...</span><span style="top:35px">Rychlý tisk...</span></div>
<div class="red" style="left:842px;top:86px;width:72px;height:32px;border-width:5px"></div>
<div class="red" style="left:843px;top:114px;width:164px;height:35px;border-width:5px"></div>

</body>
</html>
